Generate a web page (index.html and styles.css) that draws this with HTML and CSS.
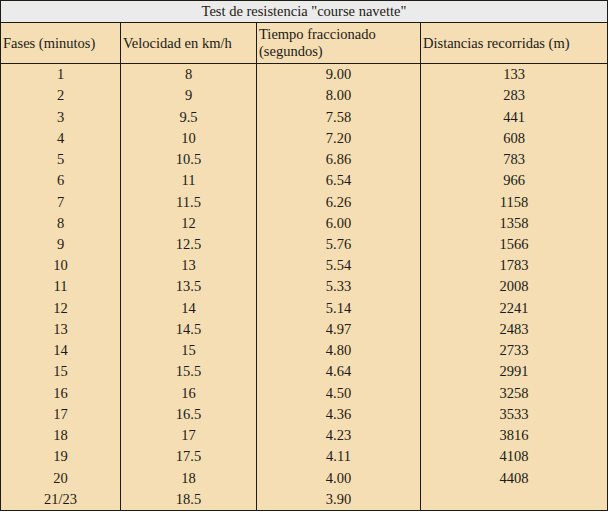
FILE: index.html
```html
<!DOCTYPE html>
<html lang="es">
<head>
<meta charset="utf-8">
<title>Test de resistencia "course navette"</title>
<link rel="stylesheet" href="styles.css">
</head>
<body>
<table class="tabla">
  <colgroup>
    <col class="c1"><col class="c2"><col class="c3"><col class="c4">
  </colgroup>
  <thead>
    <tr class="titulo"><th colspan="4">Test de resistencia "course navette"</th></tr>
    <tr class="cabecera">
      <th>Fases (minutos)</th>
      <th>Velocidad en km/h</th>
      <th>Tiempo fraccionado (segundos)</th>
      <th>Distancias recorridas (m)</th>
    </tr>
  </thead>
  <tbody>
    <tr><td>1</td><td>8</td><td>9.00</td><td>133</td></tr>
    <tr><td>2</td><td>9</td><td>8.00</td><td>283</td></tr>
    <tr><td>3</td><td>9.5</td><td>7.58</td><td>441</td></tr>
    <tr><td>4</td><td>10</td><td>7.20</td><td>608</td></tr>
    <tr><td>5</td><td>10.5</td><td>6.86</td><td>783</td></tr>
    <tr><td>6</td><td>11</td><td>6.54</td><td>966</td></tr>
    <tr><td>7</td><td>11.5</td><td>6.26</td><td>1158</td></tr>
    <tr><td>8</td><td>12</td><td>6.00</td><td>1358</td></tr>
    <tr><td>9</td><td>12.5</td><td>5.76</td><td>1566</td></tr>
    <tr><td>10</td><td>13</td><td>5.54</td><td>1783</td></tr>
    <tr><td>11</td><td>13.5</td><td>5.33</td><td>2008</td></tr>
    <tr><td>12</td><td>14</td><td>5.14</td><td>2241</td></tr>
    <tr><td>13</td><td>14.5</td><td>4.97</td><td>2483</td></tr>
    <tr><td>14</td><td>15</td><td>4.80</td><td>2733</td></tr>
    <tr><td>15</td><td>15.5</td><td>4.64</td><td>2991</td></tr>
    <tr><td>16</td><td>16</td><td>4.50</td><td>3258</td></tr>
    <tr><td>17</td><td>16.5</td><td>4.36</td><td>3533</td></tr>
    <tr><td>18</td><td>17</td><td>4.23</td><td>3816</td></tr>
    <tr><td>19</td><td>17.5</td><td>4.11</td><td>4108</td></tr>
    <tr><td>20</td><td>18</td><td>4.00</td><td>4408</td></tr>
    <tr><td>21/23</td><td>18.5</td><td>3.90</td><td></td></tr>
  </tbody>
</table>
</body>
</html>
```

FILE: styles.css
```css
html, body {
  margin: 0;
  padding: 0;
  background: #ffffff;
}

.tabla {
  width: 607px;
  table-layout: fixed;
  border-collapse: collapse;
  border: 1px solid #1e1a14;
  font-family: "Liberation Serif", Tinos, "Times New Roman", "Nimbus Roman", "DejaVu Serif", serif;
  font-size: 14.5px;
  color: #1c1a16;
  background: #f5deb3;
}

.c1 { width: 120px; }
.c2 { width: 136px; }
.c3 { width: 164px; }
.c4 { width: 187px; }

.tabla th,
.tabla td {
  padding: 0 2px;
  font-weight: normal;
  font-family: "Liberation Serif", Tinos, "Times New Roman", "Nimbus Roman", "DejaVu Serif", serif;
  border-left: 1px solid #1e1a14;
  border-right: 1px solid #1e1a14;
}

.titulo th {
  height: 21px;
  background: #ebebeb;
  text-align: center;
  border-bottom: 1px solid #1e1a14;
  line-height: 21px;
}

.cabecera th {
  height: 40px;
  text-align: left;
  vertical-align: middle;
  line-height: 17px;
  border-bottom: 1px solid #1e1a14;
}

.tabla td {
  height: 21.24px;
  line-height: 17px;
  text-align: center;
  vertical-align: middle;
}
```
